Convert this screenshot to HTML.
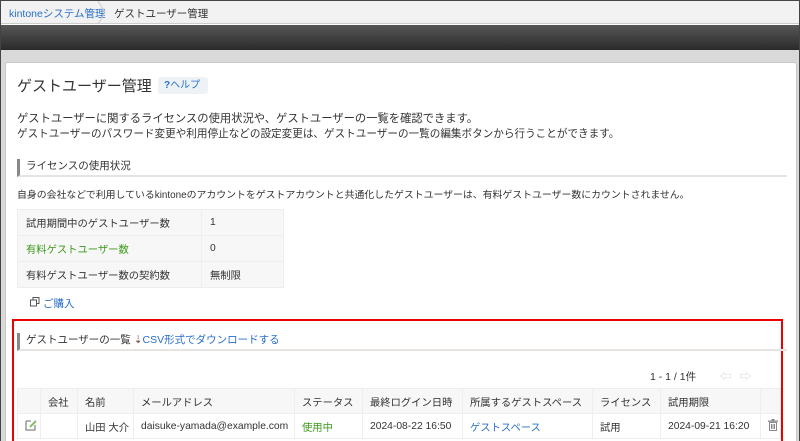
<!DOCTYPE html>
<html style="overflow:hidden;height:441px"><head><meta charset="utf-8"><style>
*{box-sizing:border-box;margin:0;padding:0}
body{width:800px;height:441px;overflow:hidden;font-family:"Liberation Sans","Noto Sans CJK JP",sans-serif;font-size:11px;color:#333;background:#fff;position:relative}
.frame{position:absolute;left:0;top:0;width:800px;height:441px;border:1px solid #444;border-bottom:none}
.bc{position:absolute;left:1px;top:1px;width:798px;height:23px;background:#f2f2f2;border-bottom:1px solid #ccc}
.bc span{position:absolute;top:5px;font-size:10.5px}
.dark{position:absolute;left:1px;top:25px;width:798px;height:25px;background:linear-gradient(#575757,#2a2a2a)}
.gray{position:absolute;left:1px;top:50px;width:798px;height:391px;background:#d9d9d9}
.panel{position:absolute;left:5px;top:62px;width:792px;height:379px;background:#fff;border:1px solid #c8c8c8;border-bottom:none;border-radius:3px 3px 0 0}
.a{position:absolute;white-space:nowrap}
.blue{color:#2a6fc9}
.sec{position:absolute;left:17px;width:770px;height:18px;border-left:3px solid #888;border-bottom:2px solid #e6e3e0;padding-left:6px;font-size:10.5px;line-height:14px}
table{border-collapse:collapse;position:absolute}
td{border:1px solid #eee;font-size:10.3px;padding-left:8px}
.lt td{background:#f7f7f7;height:26px}
.red{position:absolute;left:12px;top:319px;width:771px;height:130px;border:2px solid #e00}
.gt td{height:25px;padding-left:7px}
.gt tr:first-child td{background:#f7f7f7}
</style></head><body>
<div class="bc"><span class="blue" style="left:8px">kintoneシステム管理</span>
<svg style="position:absolute;left:96px;top:0" width="10" height="23"><path d="M1 0 L8 11.5 L1 23" fill="none" stroke="#ccc"/></svg>
<span style="left:113px">ゲストユーザー管理</span></div>
<div class="dark"></div>
<div class="gray"></div>
<div class="panel"></div>
<div class="a" style="left:17px;top:75px;font-size:15px;color:#333">ゲストユーザー管理</div>
<div class="a" style="left:158px;top:77px;width:50px;height:17px;background:#edf2f7;border-radius:3px;font-size:10px;line-height:17px;padding-left:6px"><b class="blue">?</b><span class="blue">ヘルプ</span></div>
<div class="a" style="left:17px;top:110px;font-size:11.3px">ゲストユーザーに関するライセンスの使用状況や、ゲストユーザーの一覧を確認できます。</div>
<div class="a" style="left:17px;top:126px;font-size:10.6px">ゲストユーザーのパスワード変更や利用停止などの設定変更は、ゲストユーザーの一覧の編集ボタンから行うことができます。</div>
<div class="sec" style="top:159px">ライセンスの使用状況</div>
<div class="a" style="left:17px;top:187px;font-size:9.9px">自身の会社などで利用しているkintoneのアカウントをゲストアカウントと共通化したゲストユーザーは、有料ゲストユーザー数にカウントされません。</div>
<table class="lt" style="left:17px;top:209px;width:267px">
<tr><td style="width:184px">試用期間中のゲストユーザー数</td><td>1</td></tr>
<tr><td style="color:#3a9a1a">有料ゲストユーザー数</td><td>0</td></tr>
<tr><td>有料ゲストユーザー数の契約数</td><td>無制限</td></tr></table>
<svg class="a" style="left:30px;top:297px" width="10" height="10"><rect x="3" y="0.5" width="6" height="6" fill="none" stroke="#555"/><rect x="0.5" y="3" width="6" height="6" fill="#fff" stroke="#555"/></svg>
<div class="a blue" style="left:43px;top:296px;font-size:10.5px">ご購入</div>
<div class="red"></div>
<div class="sec" style="top:333px">ゲストユーザーの一覧 <span style="color:#744">⇣</span><span class="blue">CSV形式でダウンロードする</span></div>
<div class="a" style="left:650px;top:369px;font-size:10.5px">1 - 1 / 1件</div>
<div class="a" style="left:720px;top:368px;color:#ccc;font-size:11px">⇦&nbsp;&nbsp;&nbsp;⇨</div>
<table class="gt" style="left:17px;top:388px;width:764px">
<tr><td style="width:23px"></td><td style="width:37px">会社</td><td style="width:56px">名前</td><td style="width:161px">メールアドレス</td><td style="width:68px">ステータス</td><td style="width:100px">最終ログイン日時</td><td style="width:130px">所属するゲストスペース</td><td style="width:68px">ライセンス</td><td style="width:100px">試用期限</td><td></td></tr>
<tr><td><svg width="12" height="12"><path d="M1 2 H6 M1 2 V11 H10 V6" fill="none" stroke="#888" stroke-width="1.3"/><path d="M5 8 L11 2" stroke="#8b6" stroke-width="2"/></svg></td><td></td><td>山田 大介</td><td>daisuke-yamada@example.com</td><td style="color:#3a9a1a">使用中</td><td>2024-08-22 16:50</td><td class="blue">ゲストスペース</td><td>試用</td><td>2024-09-21 16:20</td><td><svg width="10" height="12"><rect x="0" y="1.5" width="10" height="1.3" fill="#888"/><rect x="3.5" y="0" width="3" height="2" fill="#888"/><path d="M1.5 3.5 H8.5 V11.5 H1.5Z M3.5 5 V10 M5 5V10 M6.5 5V10" fill="none" stroke="#888"/></svg></td></tr>
</table>
<div class="frame"></div>
</body></html>
